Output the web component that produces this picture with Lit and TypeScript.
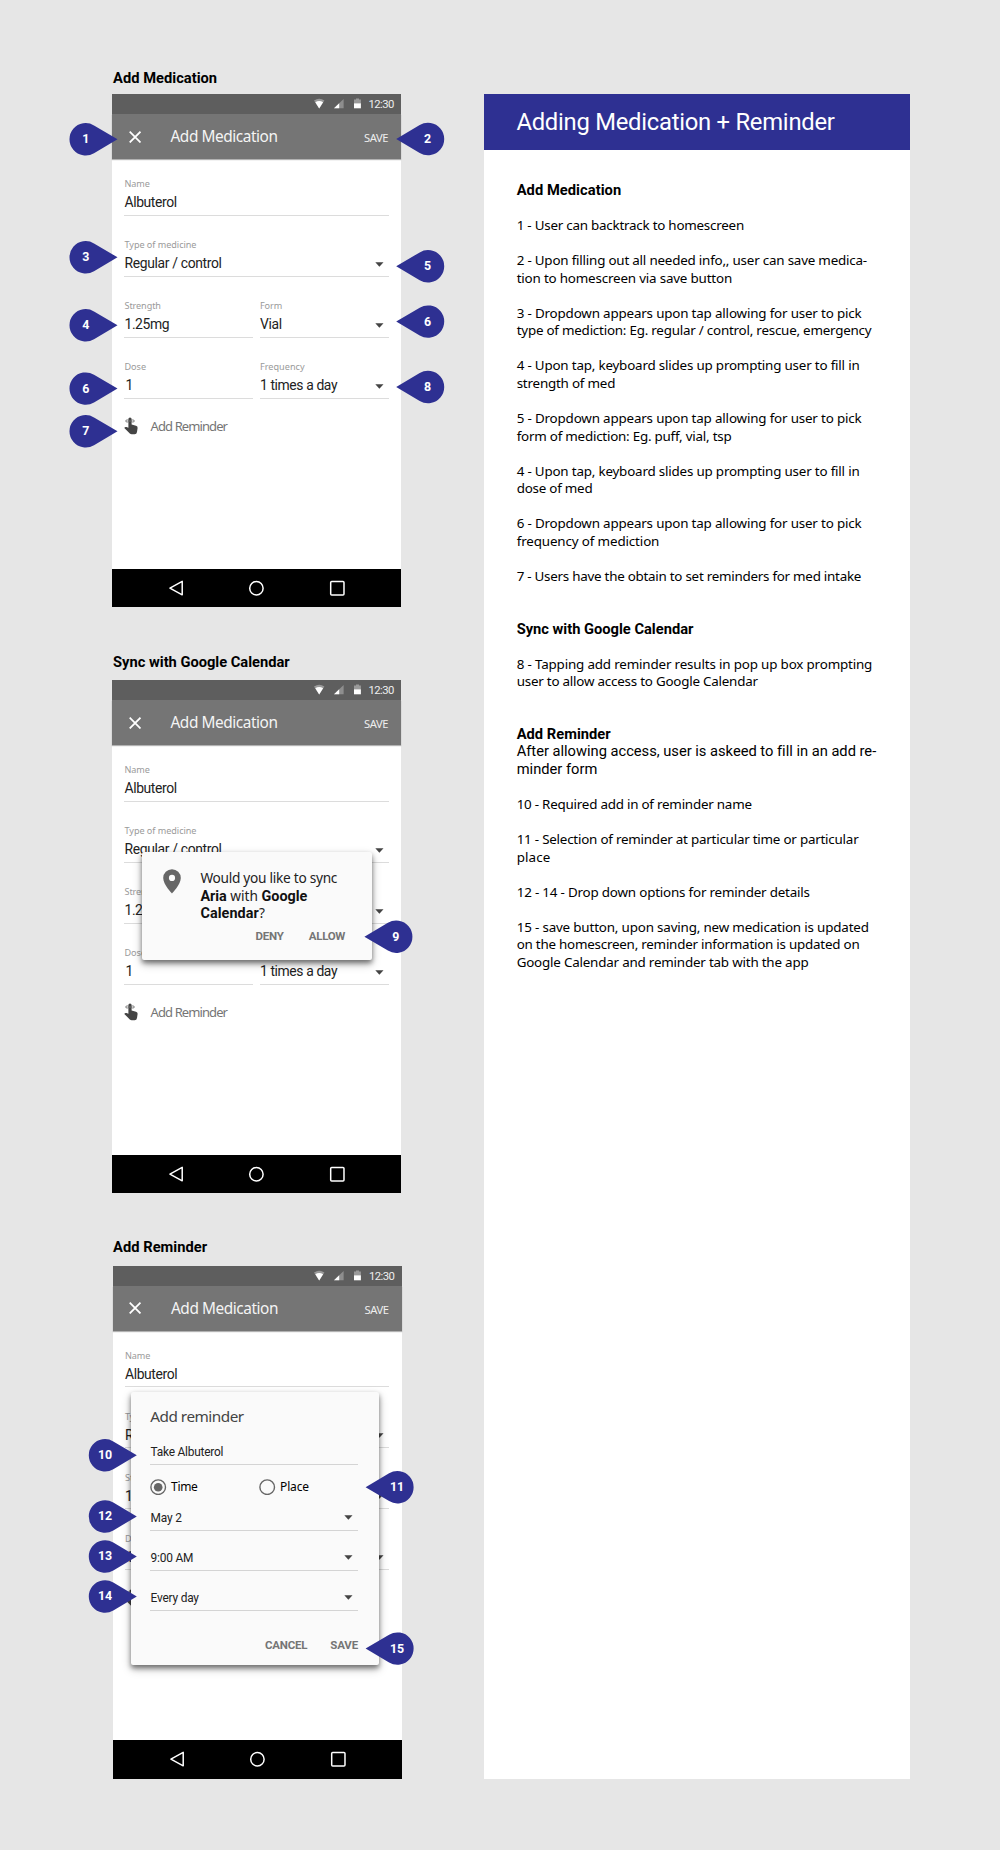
import { LitElement, html, svg, css, nothing } from "lit";
import { customElement, property } from "lit/decorators.js";
import { classMap } from "lit/directives/class-map.js";

/** One line of text whose tracking is adjusted so it spans a given width. */
@customElement("fit-text")
class FitText extends LitElement {
  @property({ type: Number }) w = 0;

  static styles = css`
    :host {
      display: block;
      white-space: pre;
      flex: none;
    }
    .line {
      display: inline-block;
    }
  `;

  updated() {
    const line = this.renderRoot.querySelector(".line") as HTMLElement;
    const chars = (this.textContent || "").trim().length;
    line.style.letterSpacing = "0";
    if (!this.w || chars < 2) return;
    const natural = line.getBoundingClientRect().width;
    line.style.letterSpacing = `${(this.w - natural) / (chars - 1)}px`;
  }

  render() {
    return html`<span class="line"><slot></slot></span>`;
  }
}

type Marker = { n: number; x: number; y: number; flip?: boolean };

const MARKERS: Marker[] = [
  { n: 1, x: 69.5, y: 139.3 },
  { n: 3, x: 69.5, y: 257.3 },
  { n: 4, x: 69.5, y: 325.3 },
  { n: 6, x: 69.5, y: 388.6 },
  { n: 7, x: 69.5, y: 431.3 },
  { n: 2, x: 396.2, y: 139, flip: true },
  { n: 5, x: 396.2, y: 266.3, flip: true },
  { n: 6, x: 396.2, y: 321.6, flip: true },
  { n: 8, x: 396.2, y: 387, flip: true },
  { n: 9, x: 364.4, y: 936.7, flip: true },
  { n: 10, x: 88.8, y: 1455.3 },
  { n: 12, x: 88.8, y: 1516.5 },
  { n: 13, x: 88.8, y: 1556.5 },
  { n: 14, x: 88.8, y: 1596.5 },
  { n: 11, x: 365.6, y: 1487.2, flip: true },
  { n: 15, x: 365.6, y: 1648.6, flip: true },
];

/** Notes: [text, width, kind]; an empty text is a blank line. */
type Note = [string, number?, ("head" | "roboto")?];

const NOTES: Note[] = [
  ["Add Medication", 104.5, "head"],
  [""],
  ["1 - User can backtrack to homescreen", 227.5],
  [""],
  ["2 - Upon filling out all needed info,, user can save medica-", 350.5],
  ["tion to homescreen via save button", 215.5],
  [""],
  ["3 - Dropdown appears upon tap allowing for user to pick", 345],
  ["type of mediction: Eg. regular / control, rescue, emergency", 355],
  [""],
  ["4 - Upon tap, keyboard slides up prompting user to fill in", 343],
  ["strength of med", 98.7],
  [""],
  ["5 - Dropdown appears upon tap allowing for user to pick", 345],
  ["form of mediction: Eg. puff, vial, tsp", 215],
  [""],
  ["4 - Upon tap, keyboard slides up prompting user to fill in", 343],
  ["dose of med", 76],
  [""],
  ["6 - Dropdown appears upon tap allowing for user to pick", 345],
  ["frequency of mediction", 142.7],
  [""],
  ["7 - Users have the obtain to set reminders for med intake", 344.7],
  [""],
  [""],
  ["Sync with Google Calendar", 176.7, "head"],
  [""],
  ["8 - Tapping add reminder results in pop up box prompting", 355.7],
  ["user to allow access to Google Calendar", 241.3],
  [""],
  [""],
  ["Add Reminder", 94, "head"],
  ["After allowing access, user is askeed to fill in an add re-", 359, "roboto"],
  ["minder form", 80.7, "roboto"],
  [""],
  ["10 - Required add in of reminder name", 235.3],
  [""],
  ["11 - Selection of reminder at particular time or particular", 342],
  ["place", 33.6],
  [""],
  ["12 - 14 - Drop down options for reminder details", 293.3],
  [""],
  ["15 - save button, upon saving, new medication is updated", 352.3],
  ["on the homescreen, reminder information is updated on", 343],
  ["Google Calendar and reminder tab with the app", 292],
];

@customElement("app-root")
class AppRoot extends LitElement {
  static styles = css`
    :host {
      display: block;
      font-family: Roboto, "Noto Sans", sans-serif;
      color: #111;
    }
    * {
      box-sizing: border-box;
    }
    svg {
      display: block;
      flex: none;
    }
    .page {
      position: relative;
      width: 1000px;
      height: 1850px;
      background: #e6e6e6;
      display: flex;
      overflow: hidden;
    }
    .screens {
      width: 289px;
      margin-left: 112.3px;
      padding-top: 68px;
    }
    .section {
      height: 584.6px;
    }
    .section-title {
      height: 26.3px;
      padding-left: 0.8px;
      font-size: 14.7px;
      line-height: 20px;
      font-weight: 700;
      color: #000;
    }
    .s2 .section-title {
      height: 27.7px;
      line-height: 18.4px;
    }
    .s3 .section-title {
      height: 28.8px;
    }
    .s3 .phone {
      margin-left: 0.5px;
    }
    .phone {
      position: relative;
      width: 289px;
      height: 513.1px;
      background: #fff;
      display: flex;
      flex-direction: column;
    }
    .status {
      height: 19.6px;
      background: #5e5e5e;
      color: #eee;
      display: flex;
      align-items: center;
      padding-left: 201.5px;
    }
    .clock {
      font-size: 11.3px;
      line-height: 19px;
      margin: 0.8px 0 0 6.3px;
    }
    .appbar {
      height: 45px;
      background: #757575;
      color: #fff;
      display: flex;
      padding-left: 16.7px;
      box-shadow: 0 1px 1px rgba(0, 0, 0, 0.3);
    }
    .close {
      margin-top: 16.7px;
    }
    .bar-title {
      font-family: "Noto Sans", sans-serif;
      font-size: 15.4px;
      line-height: 45.5px;
      margin-left: 29.3px;
      width: 193.6px;
      color: #f4f4f4;
    }
    .bar-save {
      font-family: "Noto Sans", sans-serif;
      font-size: 11.2px;
      line-height: 48px;
      color: #eee;
    }
    .form {
      flex: 1;
      padding: 10.7px 12.6px 0 12.2px;
    }
    .row {
      display: flex;
      gap: 6.6px;
      margin-bottom: 14.8px;
    }
    .field {
      flex: 1;
      height: 46.2px;
      border-bottom: 1.4px solid #dcdcdc;
    }
    .label {
      font-family: "Noto Sans", sans-serif;
      font-size: 9.1px;
      line-height: 14px;
      height: 16px;
      padding-top: 7.3px;
      color: #9a9a9a;
    }
    .value {
      display: flex;
      justify-content: space-between;
      padding-right: 5px;
      margin-top: 7.8px;
      font-size: 13.9px;
      line-height: 18px;
      color: #222;
    }
    .value svg {
      margin-top: 7.4px;
    }
    .value.pad {
      padding-left: 1px;
    }
    .remind {
      display: flex;
      padding-top: 3.6px;
      color: #757575;
      font-family: "Noto Sans", sans-serif;
      font-size: 13px;
      line-height: 18px;
    }
    .remind fit-text {
      margin-left: 11.6px;
    }
    .nav {
      height: 38.6px;
      background: #000;
    }
    .dialog {
      position: absolute;
      background: #fafafa;
      border-radius: 2px;
      box-shadow: 0 3px 5px rgba(0, 0, 0, 0.45), 0 4px 10px rgba(0, 0, 0, 0.25);
    }
    .sync {
      left: 29.4px;
      top: 172px;
      width: 230.4px;
      height: 108px;
      padding: 16.5px 0 0 21.3px;
    }
    .sync-top {
      display: flex;
    }
    .sync-copy {
      margin-left: 19.4px;
      margin-top: 0.5px;
      font-family: "Noto Sans", sans-serif;
      font-size: 13.7px;
      line-height: 17.3px;
      color: #222;
    }
    .sync-copy fit-text {
      height: 17.3px;
    }
    .sync-copy b {
      font-family: Roboto, sans-serif;
      font-size: 14.4px;
      line-height: 0;
      color: #111;
    }
    .actions {
      display: flex;
      font-size: 11.5px;
      line-height: 16px;
      font-weight: 700;
      color: #757575;
    }
    .sync .actions {
      padding-left: 92.4px;
      gap: 25px;
      margin-top: 6.6px;
    }
    .reminder {
      left: 17.9px;
      top: 126.3px;
      width: 248.4px;
      height: 272.6px;
      padding: 14px 21px 0 19.6px;
    }
    .reminder-title {
      font-family: "Noto Sans", sans-serif;
      font-size: 15.3px;
      line-height: 20px;
      color: #444;
    }
    .input {
      display: flex;
      justify-content: space-between;
      height: 40px;
      padding: 18.5px 5.4px 0 0.2px;
      border-bottom: 1.4px solid #d4d4d4;
      font-size: 11.9px;
      line-height: 17px;
      color: #222;
    }
    .first .input {
      height: 38.6px;
      padding-top: 18px;
    }
    .input svg {
      margin-top: 5.4px;
    }
    .radios {
      display: flex;
      margin-top: 14px;
      height: 12.5px;
      font-family: "Noto Sans", sans-serif;
      font-size: 12px;
      line-height: 15px;
      color: #000;
    }
    .radio {
      display: flex;
      flex: none;
      gap: 4.4px;
      width: 109px;
    }
    .reminder .actions {
      margin-top: 25.2px;
      justify-content: flex-end;
      gap: 23px;
    }
    .doc {
      position: relative;
      margin: 94.4px 0 0 82.7px;
      width: 426px;
      height: 1684.5px;
      background: #fff;
    }
    .doc-head {
      height: 56px;
      background: #2e3092;
      color: #fff;
      padding-left: 32.4px;
      font-size: 23.8px;
      line-height: 57px;
    }
    .notes {
      padding: 30.5px 0 0 32.7px;
      font-family: "Noto Sans", sans-serif;
      font-size: 13.4px;
      line-height: 19px;
      color: #000;
    }
    .note {
      height: 17.55px;
    }
    .note.head {
      font-family: Roboto, sans-serif;
      font-weight: 700;
      font-size: 14.7px;
      line-height: 19.5px;
    }
    .note.roboto {
      font-family: Roboto, sans-serif;
      font-size: 14.7px;
      line-height: 19.5px;
    }
    .markers {
      position: absolute;
      left: 0;
      top: 0;
    }
    .marker-label {
      font: 700 12.4px Roboto, sans-serif;
      fill: #fff;
      text-anchor: middle;
    }
  `;

  private arrow() {
    return html`<svg width="9" height="5" viewBox="0 0 9 5">
      <path d="M0.3 0.3h8.2L4.4 4.7z" fill="#444" />
    </svg>`;
  }

  private field(label: string, lw: number, value: string, vw: number, drop = false) {
    return html`<div class="field">
      <div class="label"><fit-text w=${lw}>${label}</fit-text></div>
      <div class=${classMap({ value: true, pad: value === "1" })}>
        <fit-text w=${vw}>${value}</fit-text>${drop ? this.arrow() : nothing}
      </div>
    </div>`;
  }

  private phone(dialog: unknown = nothing) {
    return html`<div class="phone">
      <div class="status">
        <svg width="48.5" height="12" viewBox="0 0 48.5 12">
          <path d="M0 2.6Q5.2-0.9 10.4 2.6L5.2 10.4z" fill="#9a9a9a" />
          <path d="M1.3 4.2Q5.2 1.8 9.1 4.2L5.2 10.4z" fill="#fff" />
          <path d="M29.6 1v9.3H20z" fill="#8e8e8e" />
          <path d="M25.2 5.3v5H20z" fill="#fff" />
          <path d="M42 0.4h3v1h1.9v4H40v-4h2z" fill="#9a9a9a" />
          <path d="M40 5.3h6.9v5H40z" fill="#fff" />
        </svg>
        <fit-text class="clock" w="25.8">12:30</fit-text>
      </div>
      <div class="appbar">
        <svg class="close" width="12.2" height="12.2" viewBox="0 0 12 12">
          <path d="M0.7 0.7l10.6 10.6M11.3 0.7L0.7 11.3" stroke="#fff" stroke-width="1.7" />
        </svg>
        <fit-text class="bar-title" w="107.5">Add Medication</fit-text>
        <fit-text class="bar-save" w="24.4">SAVE</fit-text>
      </div>
      <div class="form">
        <div class="row">${this.field("Name", 25.3, "Albuterol", 52.6)}</div>
        <div class="row">
          ${this.field("Type of medicine", 72, "Regular / control", 97.5, true)}
        </div>
        <div class="row">
          ${this.field("Strength", 36.5, "1.25mg", 45)}
          ${this.field("Form", 22.3, "Vial", 22.3, true)}
        </div>
        <div class="row">
          ${this.field("Dose", 21.6, "1", 0)}
          ${this.field("Frequency", 44.7, "1 times a day", 77.6, true)}
        </div>
        <div class="remind">
          <svg width="14.5" height="17.5" viewBox="0 0 14.5 17.5">
            <path
              d="M4.4 2a1.6 1.6 0 0 1 3.2 0v5.6l4.4 1.1q1.8 0.5 1.6 2.3l-0.6 4q-0.3 2.2-2.4 2.2H7.6q-1 0-1.8-0.8L0.3 10.9l0.6-0.6q0.6-0.5 1.5-0.2l2 0.6z"
              fill="#444"
            />
            <path
              d="M6 4Q3.8 2.2 2 3.2Q1.3 4 2 4.8Q3.8 5.6 6 4Q8.2 2.2 10 3.2Q10.7 4 10 4.8Q8.2 5.6 6 4"
              fill="none"
              stroke="#666"
              stroke-width="0.8"
            />
          </svg>
          <fit-text w="77.4">Add Reminder</fit-text>
        </div>
      </div>
      <div class="nav">
        <svg width="289" height="38.6" viewBox="0 0 289 38.6" fill="none" stroke="#fff" stroke-width="1.5" stroke-linejoin="round">
          <path d="M70.2 12.4V25.8L57.9 19.1z" />
          <circle cx="144.4" cy="19.3" r="6.7" />
          <rect x="218.7" y="12.6" width="13.3" height="13.3" rx="1" />
        </svg>
      </div>
      ${dialog}
    </div>`;
  }

  private syncDialog() {
    return html`<div class="dialog sync">
      <div class="sync-top">
        <svg width="18" height="25" viewBox="0 0 18 25">
          <path
            fill="#666"
            fill-rule="evenodd"
            d="M9 0.2A8.8 8.8 0 0 0 0.2 9C0.2 15.5 9 24.5 9 24.5S17.8 15.5 17.8 9A8.8 8.8 0 0 0 9 0.2zM9 5.8a3.1 3.1 0 1 1 0 6.2a3.1 3.1 0 1 1 0-6.2z"
          />
        </svg>
        <div class="sync-copy">
          <fit-text w="137">Would you like to sync</fit-text>
          <fit-text w="107"><b>Aria</b> with <b>Google</b></fit-text>
          <fit-text w="64.5"><b>Calendar</b>?</fit-text>
        </div>
      </div>
      <div class="actions">
        <fit-text w="28.6">DENY</fit-text>
        <fit-text w="36.6">ALLOW</fit-text>
      </div>
    </div>`;
  }

  private radio(label: string, w: number, on: boolean) {
    return html`<div class="radio">
      <svg width="16.4" height="16.4" viewBox="0 0 16.4 16.4">
        <circle cx="8.2" cy="8.2" r="7.3" fill="none" stroke="#666" stroke-width="1.4" />
        ${on ? svg`<circle cx="8.2" cy="8.2" r="4.3" fill="#666" />` : nothing}
      </svg>
      <fit-text w=${w}>${label}</fit-text>
    </div>`;
  }

  private input(value: string, w: number, drop = true) {
    return html`<div class="input">
      <fit-text w=${w}>${value}</fit-text>${drop ? this.arrow() : nothing}
    </div>`;
  }

  private reminderDialog() {
    return html`<div class="dialog reminder">
      <fit-text class="reminder-title" w="93.8">Add reminder</fit-text>
      <div class="first">${this.input("Take Albuterol", 73, false)}</div>
      <div class="radios">
        ${this.radio("Time", 26.8, true)} ${this.radio("Place", 29, false)}
      </div>
      ${this.input("May 2", 31.5)} ${this.input("9:00 AM", 43)}
      ${this.input("Every day", 48.5)}
      <div class="actions">
        <fit-text w="42.4">CANCEL</fit-text>
        <fit-text w="28">SAVE</fit-text>
      </div>
    </div>`;
  }

  private section(cls: string, title: string, w: number, dialog: unknown = nothing) {
    return html`<div class="section ${cls}">
      <div class="section-title"><fit-text w=${w}>${title}</fit-text></div>
      ${this.phone(dialog)}
    </div>`;
  }

  private marker(m: Marker) {
    const body = m.flip
      ? "M0 0L23.5-13.9A16.2 16.2 0 1 1 23.5 13.9z"
      : "M48 0L24.5-13.9A16.2 16.2 0 1 0 24.5 13.9z";
    return svg`<g transform="translate(${m.x} ${m.y})">
      <path d=${body} fill="#2e3092" />
      <text class="marker-label" x=${m.flip ? 31.4 : 16.2} y="3.9">${m.n}</text>
    </g>`;
  }

  render() {
    return html`<div class="page">
      <div class="screens">
        ${this.section("s1", "Add Medication", 104)}
        ${this.section("s2", "Sync with Google Calendar", 176.6, this.syncDialog())}
        ${this.section("s3", "Add Reminder", 94, this.reminderDialog())}
      </div>
      <div class="doc">
        <div class="doc-head"><fit-text w="318.5">Adding Medication + Reminder</fit-text></div>
        <div class="notes">
          ${NOTES.map(
            ([text, w, kind]) => html`<div class="note ${kind ?? ""}">
              ${text ? html`<fit-text w=${w ?? 0}>${text}</fit-text>` : nothing}
            </div>`
          )}
        </div>
      </div>
      <svg class="markers" width="1000" height="1850" viewBox="0 0 1000 1850">
        ${MARKERS.map((m) => this.marker(m))}
      </svg>
    </div>`;
  }
}
